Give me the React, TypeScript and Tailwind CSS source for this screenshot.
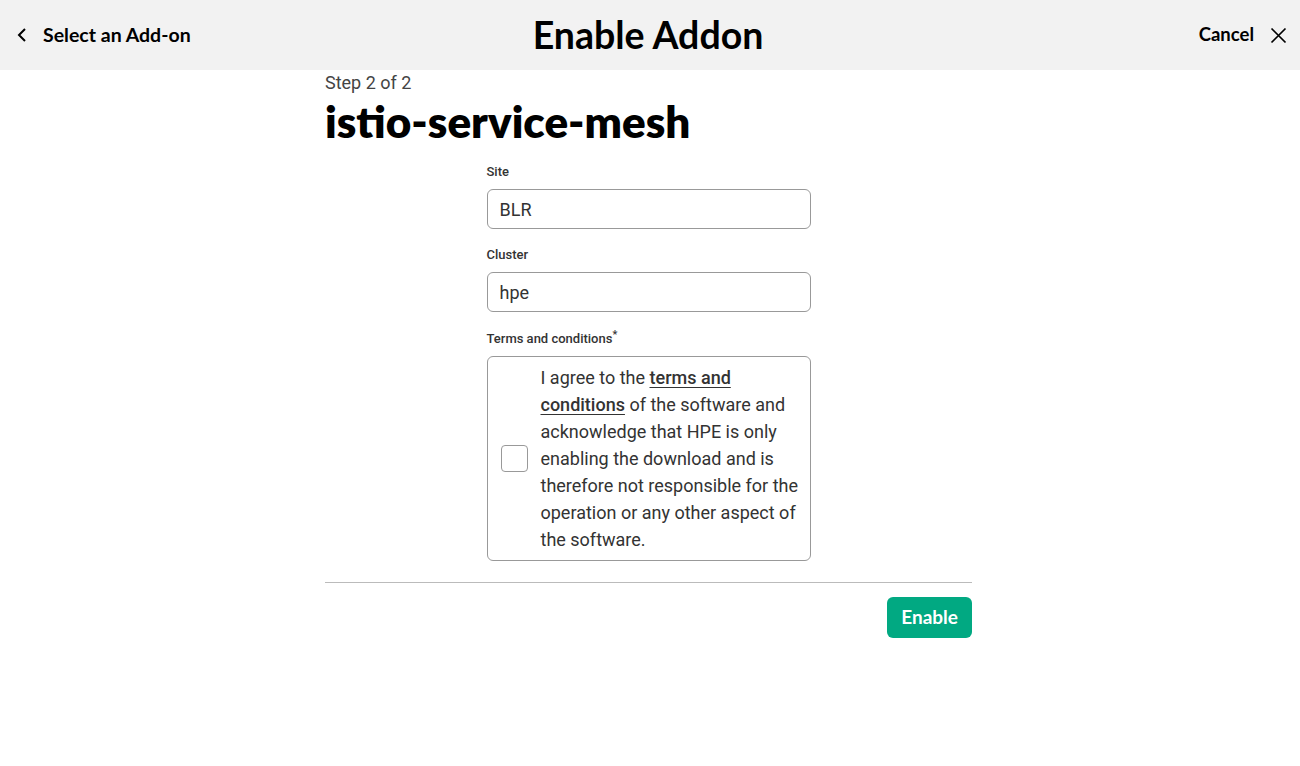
import React from "react";

export default function App() {
  return (
    <div className="min-h-[766px] w-full bg-white text-black" style={{ fontFamily: "Lato, 'Noto Sans', sans-serif" }}>
      <header className="flex h-[70px] items-center justify-between bg-[#f2f2f2] pl-[16px] pr-[13px]">
        <div className="flex w-[300px] items-center gap-[13px]">
          <svg width="14" height="16" viewBox="0 0 14 16" fill="none" stroke="#000" strokeWidth="2">
            <path d="M9 2 L3 8 L9 14" />
          </svg>
          <span className="text-[19.5px] font-bold">Select an Add-on</span>
        </div>
        <h1 className="pr-[7px] text-[37.5px] font-bold leading-none">Enable Addon</h1>
        <div className="flex w-[300px] items-center justify-end gap-[16px]">
          <span className="text-[18.5px] font-bold">Cancel</span>
          <svg width="17" height="17" viewBox="0 0 17 17" fill="none" stroke="#000" strokeWidth="1.7">
            <path d="M1.5 1.5 L15.5 15.5 M15.5 1.5 L1.5 15.5" />
          </svg>
        </div>
      </header>
      <div className="flex justify-center pr-[3px]">
        <main className="w-[647px]">
          <div className="pt-[1px] text-[18px] leading-[24px] text-[#444]" style={{ fontFamily: "Roboto, sans-serif" }}>Step 2 of 2</div>
          <h2 className="text-[44px] font-extrabold leading-[52px]">istio-service-mesh</h2>
          <div className="mx-auto mt-[16px] w-[324px]" style={{ fontFamily: "Roboto, sans-serif" }}>
            <label className="block text-[13px] font-medium leading-[18px] text-[#333]">Site</label>
            <div className="mt-[8px] flex h-[40px] items-center rounded-[6px] border border-[#999] px-[12px] text-[18px] text-[#333]">BLR</div>
            <label className="mt-[17px] block text-[13px] font-medium leading-[18px] text-[#333]">Cluster</label>
            <div className="mt-[8px] flex h-[40px] items-center rounded-[6px] border border-[#999] px-[12px] text-[18px] text-[#333]">hpe</div>
            <label className="mt-[18px] block text-[13px] font-medium leading-[18px] text-[#333]">
              Terms and conditions<sup className="text-[11px]">*</sup>
            </label>
            <div className="mt-[8px] flex items-center gap-[13px] rounded-[6px] border border-[#999] py-[7px] pl-[13px] pr-[10px]">
              <div className="h-[27px] w-[27px] shrink-0 rounded-[4px] border border-[#999]" />
              <p className="text-[18px] leading-[27px] text-[#333]">
                I agree to the <span className="font-medium underline underline-offset-[3px]">terms and conditions</span> of the software and acknowledge that HPE is only enabling the download and is therefore not responsible for the operation or any other aspect of the software.
              </p>
            </div>
          </div>
          <div className="mt-[21px] border-t border-[#bbb]" />
          <div className="mt-[14px] flex justify-end">
            <button className="h-[41px] rounded-[6px] bg-[#01a982] px-[14px] text-[19px] font-bold text-white">Enable</button>
          </div>
        </main>
      </div>
    </div>
  );
}
